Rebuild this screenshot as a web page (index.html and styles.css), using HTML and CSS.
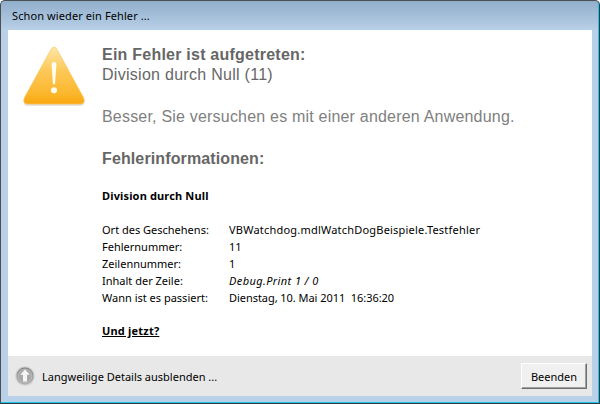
FILE: index.html
```html
<!DOCTYPE html>
<html lang="de">
<head>
<meta charset="utf-8">
<title>Schon wieder ein Fehler ...</title>
<link rel="stylesheet" href="styles.css">
</head>
<body>
<div class="window">
  <div class="titlebar">Schon wieder ein Fehler ...</div>
  <div class="client">
    <main class="content">
      <svg class="warn" width="64" height="64" viewBox="0 0 64 64" aria-hidden="true">
        <defs>
          <linearGradient id="tri" x1="0" y1="0" x2="0" y2="1">
            <stop offset="0" stop-color="#fde7a8"/>
            <stop offset="0.4" stop-color="#fdc95a"/>
            <stop offset="0.8" stop-color="#fbb82f"/>
            <stop offset="1" stop-color="#f9a80e"/>
          </linearGradient>
        </defs>
        <path d="M32 3.5 Q33.6 3.5 35 6 L61.5 54 Q64 60 58.5 60.5 L5.5 60.5 Q0 60 2.5 54 L29 6 Q30.4 3.5 32 3.5Z" fill="#c4c0b4" opacity=".55" transform="translate(0 1.2)"/>
        <path d="M32 3 Q33.6 3 35 5.5 L61.5 53.5 Q64 59.5 58.5 60 L5.5 60 Q0 59.5 2.5 53.5 L29 5.5 Q30.4 3 32 3Z" fill="url(#tri)" stroke="#fbc45a" stroke-width=".7"/>
        <path d="M29.6 21 Q29.4 18 32 18 Q34.6 18 34.4 21 L33.2 38.5 Q33 40.5 32 40.5 Q31 40.5 30.8 38.5Z" fill="#fffdf0"/>
        <circle cx="32" cy="46.3" r="3" fill="#fffdf0"/>
      </svg>
      <div class="body">
        <h1 class="head">Ein Fehler ist aufgetreten:</h1>
        <p class="sub">Division durch Null (11)</p>
        <p class="advice">Besser, Sie versuchen es mit einer anderen Anwendung.</p>
        <h2 class="head info-head">Fehlerinformationen:</h2>
        <h3 class="err-title">Division durch Null</h3>
        <dl class="facts">
          <dt>Ort des Geschehens:</dt><dd class="wide">VBWatchdog.mdlWatchDogBeispiele.Testfehler</dd>
          <dt>Fehlernummer:</dt><dd>11</dd>
          <dt>Zeilennummer:</dt><dd>1</dd>
          <dt>Inhalt der Zeile:</dt><dd class="code">Debug.Print 1 / 0</dd>
          <dt>Wann ist es passiert:</dt><dd class="pre">Dienstag, 10. Mai 2011  16:36:20</dd>
        </dl>
        <p class="now">Und jetzt?</p>
      </div>
    </main>
    <footer class="footer">
      <div class="toggle">
        <svg width="20" height="20" viewBox="0 0 20 20" aria-hidden="true">
          <defs>
            <linearGradient id="orb" x1="0" y1="0" x2="0" y2="1">
              <stop offset="0" stop-color="#7f7f7f"/>
              <stop offset="1" stop-color="#a9a9a9"/>
            </linearGradient>
          </defs>
          <circle cx="10" cy="10" r="9.8" fill="#cfcfcf"/>
          <circle cx="10" cy="10" r="8.5" fill="url(#orb)"/>
          <circle cx="10" cy="10" r="7" fill="#a8a8a8" stroke="#cfcfcf" stroke-width=".7"/>
          <path d="M10 3.4 L14.8 8.8 L12 8.8 L12 15.6 L8 15.6 L8 8.8 L5.2 8.8Z" fill="#f6f6f6"/>
        </svg>
        <span>Langweilige Details ausblenden ...</span>
      </div>
      <button class="btn" type="button">Beenden</button>
    </footer>
  </div>
</div>
</body>
</html>
```
FILE: styles.css
```css
* { box-sizing: border-box; }
html, body { margin: 0; padding: 0; background: #fff; }
.window {
  width: 600px;
  height: 404px;
  display: flex;
  flex-direction: column;
  padding: 0 7px 7px;
  background: linear-gradient(#91aecb 0, #b9d1e8 30px, #b9d1e8 100%);
  border: 1px solid;
  border-color: #4a4f54 #2a3a42 #2a3a42 #4a4f54;
  border-radius: 5px 5px 0 0;
  box-shadow: inset -1px -1px 0 #1cc6ea;
  font-family: "Noto Sans", sans-serif;
  font-size: 11px;
  color: #000;
}
.titlebar {
  flex: none;
  height: 29px;
  padding: 0 4px;
  line-height: 29px;
  font-size: 11px;
  letter-spacing: .1px;
}
.client {
  flex: 1;
  display: flex;
  flex-direction: column;
  min-height: 0;
  background: #fff;
}
.content {
  flex: 1;
  display: flex;
  gap: 16px;
  min-height: 0;
  padding: 14px 0 0 14px;
}
.warn { flex: none; }
.body { flex: 1; padding-top: 1px; }
.head, .sub, .advice, .err-title, .now { margin: 0; }
.head {
  font: bold 16px/20px "Liberation Sans", Arial, sans-serif;
  letter-spacing: .23px;
  color: #666;
}
.sub {
  font: 16px/20px "Liberation Sans", Arial, sans-serif;
  letter-spacing: .28px;
  color: #666;
}
.advice {
  margin-top: 22px;
  font: 16px/20px "Liberation Sans", Arial, sans-serif;
  letter-spacing: .2px;
  color: #808080;
}
.info-head { margin-top: 22px; letter-spacing: .12px; }
.err-title {
  margin-top: 20px;
  font-size: 11px;
  font-weight: 700;
  line-height: 14px;
  letter-spacing: .15px;
}
.facts {
  margin: 18px 0 0;
  display: grid;
  grid-template-columns: 127px 1fr;
  grid-auto-rows: 17px;
  line-height: 17px;
}
.facts dt, .facts dd { margin: 0; }
.wide { letter-spacing: .21px; }
.code { font-style: italic; letter-spacing: .4px; }
.pre { white-space: pre; letter-spacing: -.05px; }
.now {
  margin-top: 18px;
  font-weight: 700;
  text-decoration: underline;
  line-height: 14px;
  letter-spacing: .2px;
}
.footer {
  flex: none;
  height: 40px;
  background: #e8e8e8;
  display: flex;
  align-items: center;
  justify-content: space-between;
  padding: 0 5px 0 7px;
}
.toggle { display: flex; align-items: center; gap: 7px; font-size: 11px; }
.btn {
  width: 66px;
  height: 26px;
  padding: 0;
  background: #f0f0f0;
  border: 1px solid;
  border-color: #fff #6e6e6e #6e6e6e #fff;
  box-shadow: inset -1px -1px 0 #a0a0a0;
  font: 11px "Noto Sans", sans-serif;
  color: #000;
}
```
